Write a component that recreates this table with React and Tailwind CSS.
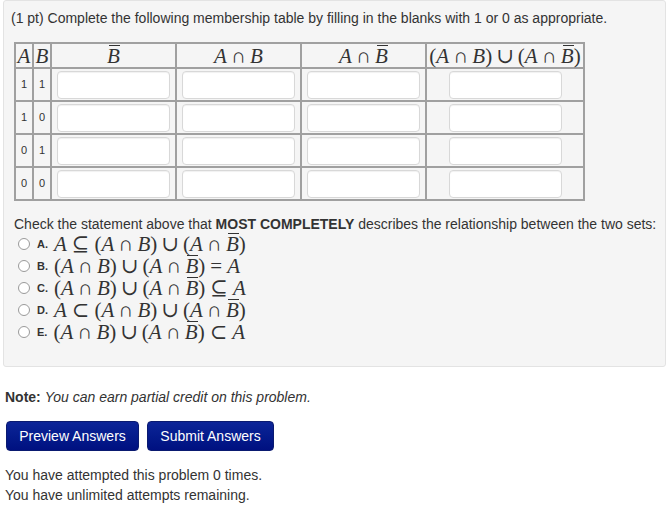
import React from 'react'

const sans = { fontFamily: '"Liberation Sans", Arial, sans-serif' }
const serif = { fontFamily: '"Liberation Serif", "DejaVu Serif", serif' }

// B with a bar over it
function Bbar() {
  return (
    <span className="relative inline-block">
      <span className="absolute left-[2px] right-0 top-0 h-px bg-[#333]"></span>
      <i>B</i>
    </span>
  )
}

// binary operator / relation spacing, roughly as TeX does it
function Op({ children }) {
  return <span className="mx-[4px]">{children}</span>
}
function Rel({ children }) {
  return <span className="mx-[5px]">{children}</span>
}

function Both() {
  return (
    <>
      (<i>A</i><Op>∩</Op><i>B</i>)<Op>∪</Op>(<i>A</i><Op>∩</Op><Bbar />)
    </>
  )
}

const rows = [
  ['1', '1'],
  ['1', '0'],
  ['0', '1'],
  ['0', '0'],
]

const options = [
  { key: 'A', math: <><i>A</i><Rel>⊆</Rel><Both /></> },
  { key: 'B', math: <><Both /><Rel>=</Rel><i>A</i></> },
  { key: 'C', math: <><Both /><Rel>⊆</Rel><i>A</i></> },
  { key: 'D', math: <><i>A</i><Rel>⊂</Rel><Both /></> },
  { key: 'E', math: <><Both /><Rel>⊂</Rel><i>A</i></> },
]

function Blank({ wide }) {
  return (
    <td className="border-2 border-[#a0a0a0] px-[5px] py-0">
      <input
        type="text"
        className={`block h-[28px] w-[113px] rounded-[4px] border border-[#d8d8d8] bg-white shadow-[inset_0_1px_1px_rgba(0,0,0,0.06)] outline-none ${wide ? 'mx-auto' : ''}`}
      />
    </td>
  )
}

export default function App() {
  return (
    <div className="min-h-[517px] w-[666px] bg-white text-[#333] text-[14px]" style={sans}>
      {/* problem box */}
      <div className="ml-[3px] h-[367px] rounded-[3px] border border-[#e3e3e3] bg-[#f5f5f5] pl-[7px] pt-[8px]">
        <p className="leading-[18px]">
          (1 pt) Complete the following membership table by filling in the blanks with 1 or 0 as appropriate.
        </p>

        <table className="ml-[3px] mt-[15px] border-collapse border-2 border-[#7a7a7a]">
          <thead>
            <tr className="h-[25px] text-[21px] leading-[22px]" style={serif}>
              <th className="w-[18px] border-2 border-[#a0a0a0] p-0 font-normal"><i>A</i></th>
              <th className="w-[18px] border-2 border-[#a0a0a0] p-0 font-normal"><i>B</i></th>
              <th className="w-[125px] border-2 border-[#a0a0a0] font-normal"><Bbar /></th>
              <th className="w-[124px] border-2 border-[#a0a0a0] font-normal">
                <i>A</i><Op>∩</Op><i>B</i>
              </th>
              <th className="w-[125px] border-2 border-[#a0a0a0] font-normal">
                <i>A</i><Op>∩</Op><Bbar />
              </th>
              <th className="w-[158px] border-2 border-[#a0a0a0] p-0 font-normal whitespace-nowrap">
                <Both />
              </th>
            </tr>
          </thead>
          <tbody>
            {rows.map(([a, b], i) => (
              <tr key={i} className="h-[33px] text-[11px]">
                <td className="border-2 border-[#a0a0a0] text-center">{a}</td>
                <td className="border-2 border-[#a0a0a0] text-center">{b}</td>
                <Blank />
                <Blank />
                <Blank />
                <Blank wide />
              </tr>
            ))}
          </tbody>
        </table>

        <p className="ml-[3px] mt-[14px] leading-[18px]">
          Check the statement above that <b>MOST COMPLETELY</b> describes the relationship between the two sets:
        </p>

        <div className="ml-[7px] mt-0 flex flex-col">
          {options.map((o) => (
            <label key={o.key} className="flex h-[22px] items-center">
              <span className="h-[12px] w-[12px] shrink-0 rounded-full border border-[#9a9a9a] bg-white"></span>
              <span className="ml-[7px] text-[11px] font-bold">{o.key}.</span>
              <span className="ml-[6px] whitespace-nowrap text-[21px] leading-[22px]" style={serif}>
                {o.math}
              </span>
            </label>
          ))}
        </div>
      </div>

      <p className="ml-[5px] mt-[21px] leading-[18px]">
        <b>Note:</b> <i>You can earn partial credit on this problem.</i>
      </p>

      <div className="ml-[6px] mt-[15px] flex gap-[8px]">
        <button className="h-[30px] w-[133px] rounded-[4px] border border-[#0a1a70] bg-gradient-to-b from-[#0d2598] to-[#001080] text-[14px] text-white">
          Preview Answers
        </button>
        <button className="h-[30px] w-[127px] rounded-[4px] border border-[#0a1a70] bg-gradient-to-b from-[#0d2598] to-[#001080] text-[14px] text-white">
          Submit Answers
        </button>
      </div>

      <div className="ml-[5px] mt-[14px] leading-[20px]">
        <p>You have attempted this problem 0 times.</p>
        <p>You have unlimited attempts remaining.</p>
      </div>
    </div>
  )
}
